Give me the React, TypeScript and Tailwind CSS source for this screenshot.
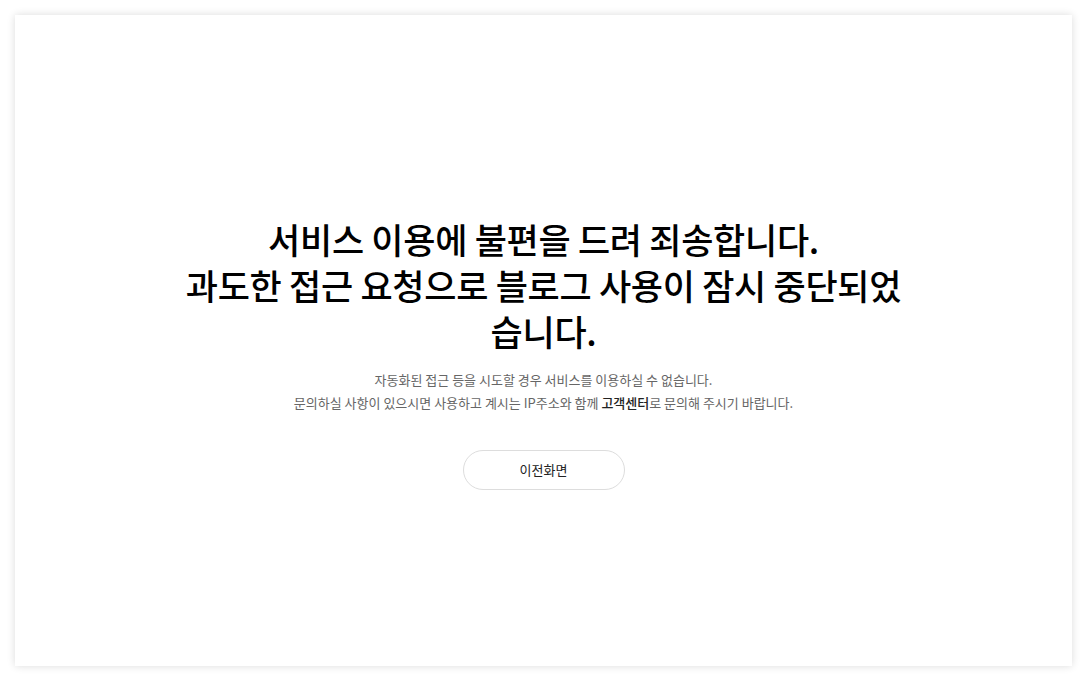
export default function App() {
  return (
    <div className="min-h-screen bg-white p-[15px] font-['Noto_Sans_CJK_KR','Noto_Sans',sans-serif]">
      <div className="flex h-[651px] flex-col items-center justify-center bg-white pt-6 shadow-[0_0_8px_rgba(0,0,0,0.14)]">
        {/* 제목 */}
        <h1 className="max-w-[726px] text-center text-[35px] font-medium leading-[46px] tracking-[-0.3px] text-black">
          서비스 이용에 불편을 드려 죄송합니다.
          <br />
          과도한 접근 요청으로 블로그 사용이 잠시 중단되었습니다.
        </h1>

        {/* 안내 문구 */}
        <p className="mt-[14px] text-center text-[13px] leading-[23px] text-[#666]">
          자동화된 접근 등을 시도할 경우 서비스를 이용하실 수 없습니다.
          <br />
          문의하실 사항이 있으시면 사용하고 계시는 IP주소와 함께{" "}
          <span className="font-medium text-[#222]">고객센터</span>로 문의해
          주시기 바랍니다.
        </p>

        <button className="mt-9 h-10 w-[162px] rounded-full border border-[#ddd] bg-white text-[13px] text-[#222]">
          이전화면
        </button>
      </div>
    </div>
  );
}
